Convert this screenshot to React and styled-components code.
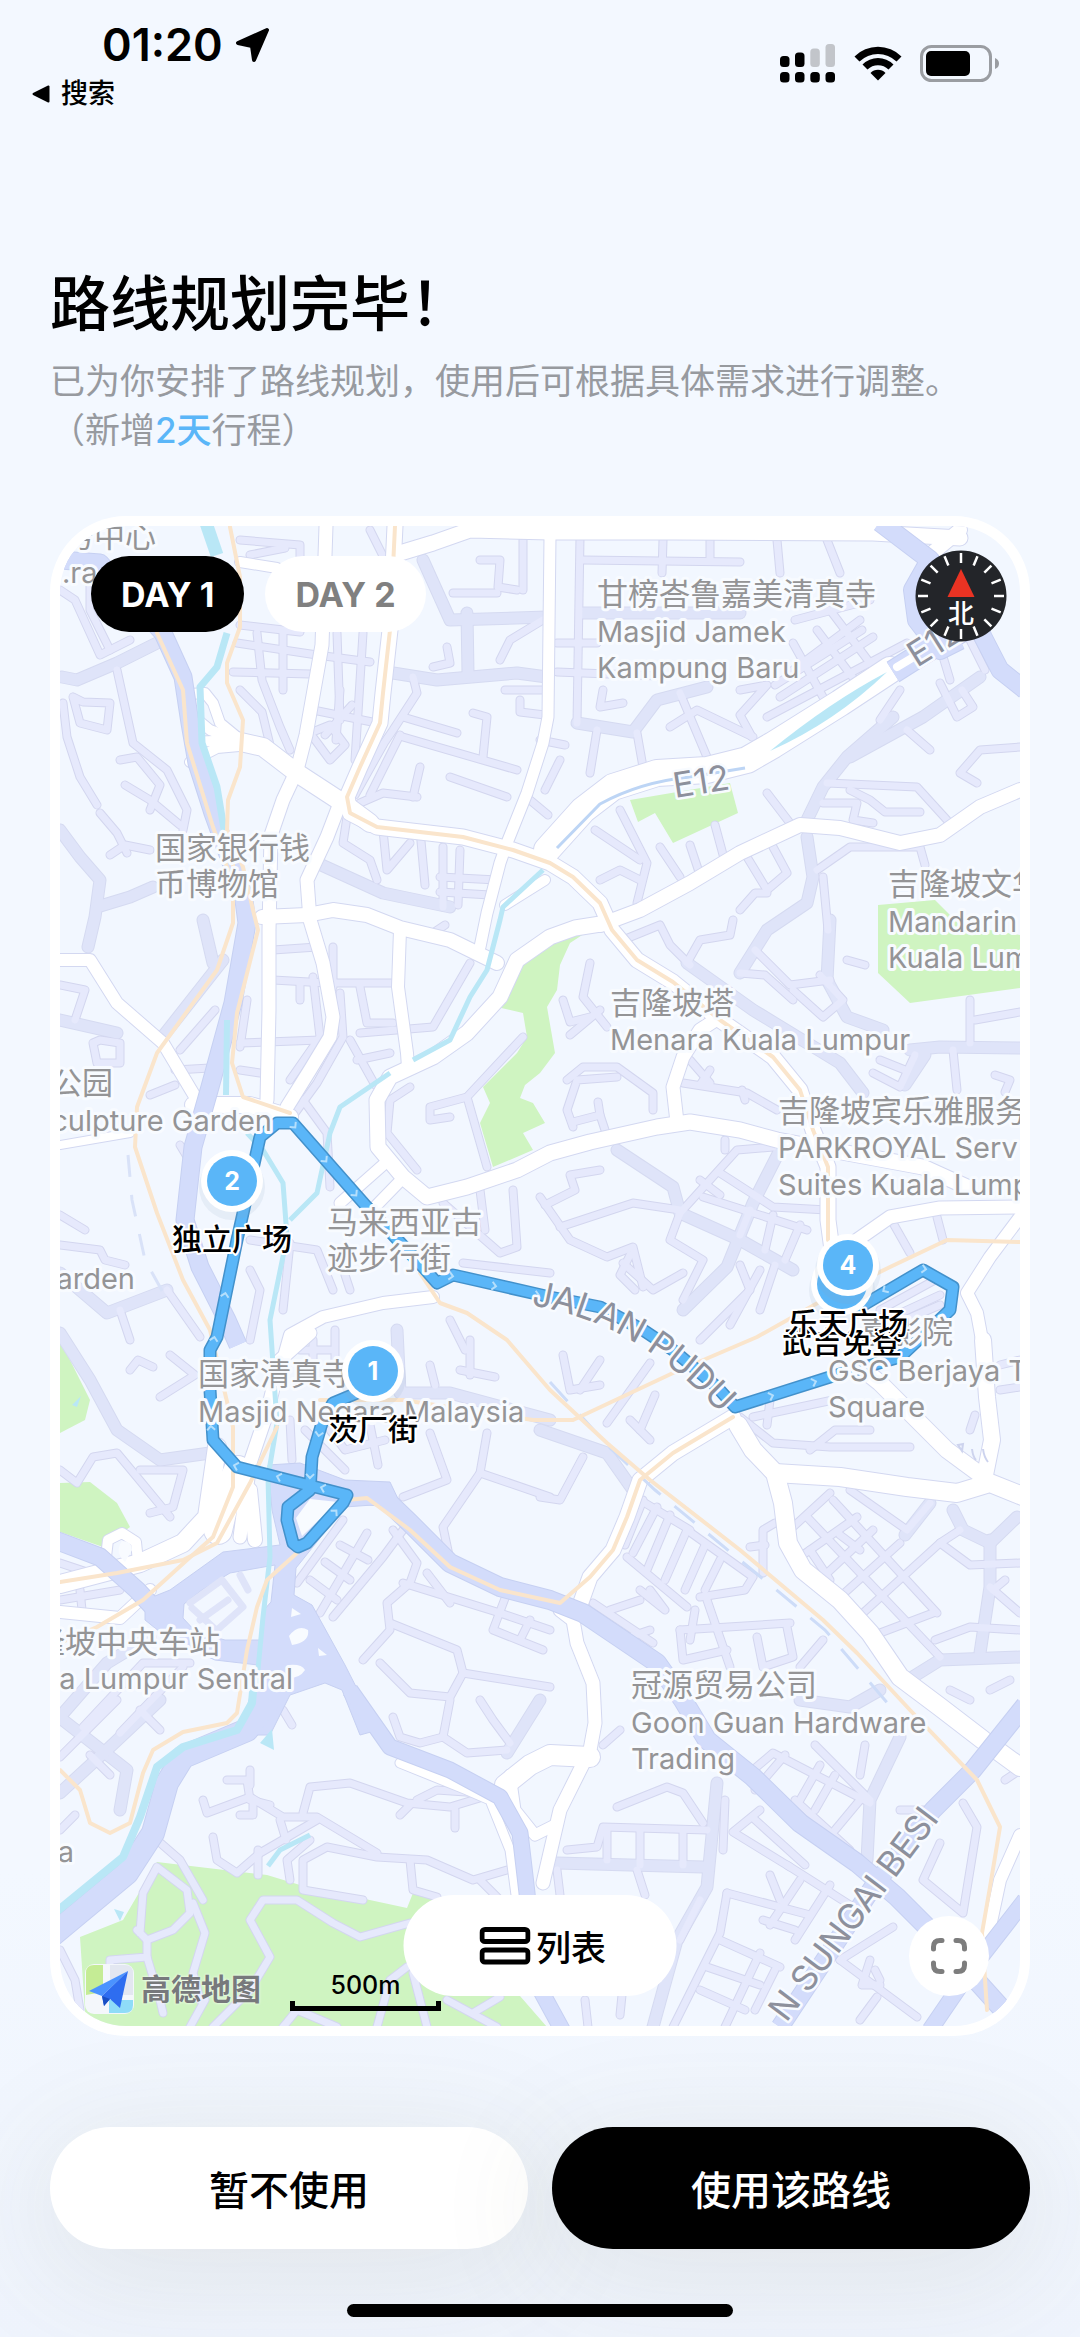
import React, { useState } from 'react';
import styled, { createGlobalStyle } from 'styled-components';

const GlobalStyle = createGlobalStyle`
  * {
    box-sizing: border-box;
  }

  body {
    margin: 0;
    background: #f3f8ff;
    font-family: Inter, 'Noto Sans CJK SC', sans-serif;
    color: #000;
  }

  button {
    border: 0;
    padding: 0;
    font-family: inherit;
    cursor: pointer;
  }
`;

const Page = styled.div`
  min-height: 100vh;
  display: flex;
  flex-direction: column;
  overflow: hidden;
  background: linear-gradient(180deg, #f3f8ff 0%, #f3f8ff 80%, #eff4fd 100%);
`;

/* ---------- status bar ---------- */

const StatusBar = styled.header`
  display: flex;
  justify-content: space-between;
  align-items: flex-start;
  height: 260px;
  padding: 20px 80px 0 32px;
`;

const StatusLeft = styled.div`
  display: flex;
  flex-direction: column;
`;

const Clock = styled.div`
  display: flex;
  align-items: center;
  gap: 12px;
  padding-left: 70px;
  font-size: 45px;
  font-weight: 600;
  line-height: 50px;
`;

const BackLink = styled.a`
  display: flex;
  align-items: center;
  gap: 11px;
  margin-top: 4px;
  font-size: 27px;
  font-weight: 500;
  line-height: 40px;
  color: inherit;
  text-decoration: none;
`;

const StatusIcons = styled.div`
  display: flex;
  align-items: center;
  gap: 18px;
  padding-top: 23px;
`;

/* ---------- heading ---------- */

const Heading = styled.section`
  padding: 0 50px;
`;

const Title = styled.h1`
  margin: 0;
  font-size: 60px;
  font-weight: 500;
  line-height: 88px;
`;

const Subtitle = styled.p`
  margin: 9px 0 0;
  font-size: 35px;
  line-height: 49px;
  color: #979a9f;
`;

const Accent = styled.span`
  color: #5ab6f8;
  font-weight: 500;
`;

/* ---------- map card ---------- */

const MapCard = styled.section`
  position: relative;
  margin: 61px 50px 0;
  padding: 10px;
  border-radius: 76px;
  background: #fff;
`;

const MapCanvas = styled.svg`
  display: block;
  width: 100%;
  height: auto;
  border-radius: 66px;
  background: #f2f7ff;
`;

const Line = styled.polyline`
  fill: none;
  stroke: ${props => props.$color};
  stroke-width: ${props => props.$width};
  stroke-linejoin: round;
  stroke-linecap: ${props => props.$cap || 'round'};
`;

const Label = styled.text`
  font-size: ${props => (props.$latin ? 29 : 31)}px;
  fill: #949496;
  stroke: #f8fbff;
  stroke-width: 6px;
  stroke-linejoin: round;
  paint-order: stroke;
`;

const RoadName = styled.text`
  font-size: 35px;
  fill: #8d909c;
  stroke: #f8fbff;
  stroke-width: 5px;
  stroke-linejoin: round;
  paint-order: stroke;
`;

const PinNumber = styled.text`
  font-size: 25px;
  font-weight: 700;
  fill: #fff;
  text-anchor: middle;
`;

const PinName = styled.text`
  font-size: 30px;
  font-weight: 500;
  fill: #000;
  stroke: #fff;
  stroke-width: 4px;
  stroke-linejoin: round;
  paint-order: stroke;
  text-anchor: middle;
`;

const DayTabs = styled.div`
  position: absolute;
  top: 40px;
  left: 41px;
  display: flex;
  gap: 21px;
`;

const DayTab = styled.button`
  height: 76px;
  padding: 0 30px;
  border-radius: 38px;
  font-size: 34px;
  font-weight: 700;
  background: ${props => (props.$active ? '#000' : '#fff')};
  color: ${props => (props.$active ? '#fff' : '#808080')};
`;

const CompassButton = styled.button`
  position: absolute;
  top: 34px;
  right: 23px;
  width: 92px;
  height: 92px;
  border-radius: 50%;
  background: none;
`;

const ListButton = styled.button`
  position: absolute;
  bottom: 40px;
  left: 50%;
  transform: translateX(-50%);
  display: flex;
  align-items: center;
  justify-content: center;
  gap: 5px;
  width: 273px;
  height: 101px;
  padding-left: 6px;
  border-radius: 51px;
  background: #fff;
  font-size: 35px;
  font-weight: 500;
  color: #000;
`;

const FullscreenButton = styled.button`
  position: absolute;
  right: 41px;
  bottom: 40px;
  display: flex;
  align-items: center;
  justify-content: center;
  width: 80px;
  height: 80px;
  border-radius: 50%;
  background: #fff;
`;

const MapLogo = styled.div`
  position: absolute;
  left: 35px;
  bottom: 22px;
  display: flex;
  align-items: center;
  gap: 7px;
  font-size: 30px;
  font-weight: 700;
  line-height: 50px;
  color: #77797c;
  text-shadow: 0 0 3px #fff;
`;

const MapScale = styled.div`
  position: absolute;
  left: 240px;
  bottom: 25px;
  width: 151px;
  border: 5px solid #000;
  border-top: 0;
  height: 10px;
`;

const ScaleText = styled.span`
  position: absolute;
  left: 0;
  right: 0;
  bottom: 6px;
  text-align: center;
  font-size: 25px;
  font-weight: 500;
  line-height: 30px;
`;

/* ---------- footer ---------- */

const Actions = styled.div`
  display: grid;
  grid-template-columns: 1fr 1fr;
  gap: 24px;
  margin: 91px 50px 0;
`;

const ActionButton = styled.button`
  height: 122px;
  border-radius: 61px;
  font-size: 40px;
  font-weight: 500;
  background: ${props => (props.$primary ? '#000' : '#fff')};
  color: ${props => (props.$primary ? '#fff' : '#000')};
  box-shadow: 0 20px 120px 10px rgba(100, 100, 60, 0.1);
`;

const HomeIndicator = styled.div`
  width: 386px;
  height: 13px;
  margin: auto auto 20px;
  border-radius: 7px;
  background: #000;
`;

/* ---------- map data ---------- */

const MAP_VIEW = '60 526 960 1500';

const parks = [
  '630,800 730,783 738,813 673,843 655,813 638,822',
  '593,928 570,943 560,965 557,990 547,1007 555,1053 540,1073 525,1085 520,1098 533,1103 545,1123 523,1133 533,1150 493,1167 480,1123 490,1103 483,1087 517,1053 527,1037 523,1013 497,1007 510,973 537,943 560,932',
  '878,905 878,973 910,1003 1020,988 1020,935 960,925 935,900',
  '60,1340 90,1400 85,1420 60,1433',
  '60,1483 90,1482 117,1503 130,1527 103,1547 60,1532',
  '157,1862 267,1875 300,1885 407,1908 413,1893 450,1900 520,1996 547,2027 86,2027 80,1937 123,1920',
];

const lanes = [
  '117,670 133,743 167,770 187,810 183,830', '63,703 67,737 80,777 97,805',
  '73,697 80,723 107,730 110,703 83,702 73,697', '120,760 137,757 160,785 150,810', '125,785 150,800 180,825',
  '100,813 117,833 127,853', '110,855 125,845 150,850', '90,570 90,610 110,650', '130,640 100,655 75,600 60,590',
  '237,643 317,655 370,662', '240,625 300,632', '257,633 262,680', '283,633 283,690', '337,633 340,720',
  '363,633 355,760', '233,672 310,674', '263,683 280,727 290,750', '240,690 262,712 270,745', '313,710 377,723',
  '310,733 330,760 345,745 330,725 310,733', '325,735 352,705', '340,690 336,740', '453,593 497,593',
  '480,560 500,560 498,587 517,590', '523,540 523,590', '403,717 457,733', '403,737 517,770', '473,713 487,717 483,757',
  '413,677 417,693 393,730 350,793', '433,667 450,663 447,647', '543,620 510,640 500,660', '450,777 507,797',
  '420,767 413,797', '360,803 383,793 417,797', '347,817 343,843 370,860 377,880', '383,830 387,870 410,843',
  '443,847 443,907', '460,850 458,905', '440,877 497,880', '440,892 490,895', '420,830 425,885', '383,745 355,795', '400,735 370,795',
  '545,690 505,690', '545,715 520,712 520,700', '530,800 548,815', '240,540 300,545 300,560', '250,555 285,548', '370,530 385,560 345,575',
  '580,537 577,723', '663,540 662,573', '710,540 710,560', '583,560 740,562', '777,540 780,573', '827,540 840,573',
  '557,643 597,643', '557,672 660,676', '603,690 600,707 623,703', '680,693 707,757', '670,727 697,710 753,737',
  '637,733 643,767', '597,730 590,773', '740,690 767,685 740,715 752,737', '767,717 907,643', '780,697 873,637',
  '793,670 860,620', '775,685 862,630', '793,643 823,697', '817,630 857,683', '830,610 873,667', '795,620 870,600',
  '940,683 957,717 973,707 962,690', '907,730 930,750', '1020,747 980,750 960,773 977,783', '827,783 917,787 947,820',
  '823,803 857,803 853,820 873,823', '850,790 870,800 885,812 920,812', '767,793 793,827', '817,870 850,847 920,847 925,865', '823,877 828,930',
  '620,810 647,863 637,903', '660,847 680,877', '747,857 767,890 787,873 773,847', '740,910 755,893 767,893', '595,830 640,860', '600,880 620,870 640,880',
  '690,845 700,875', '715,825 725,862', '540,740 565,745', '560,760 545,790', '900,690 880,720', '935,630 950,680', '970,640 985,670',
  '273,950 317,947', '273,980 327,983 393,983', '333,947 333,987', '240,1043 320,1040', '247,1000 240,1047', '240,1070 260,1073',
  '313,977 320,1037 290,1080', '340,993 343,1037 317,1083 290,1120', '360,987 367,1023 393,1023', '357,1060 390,1053', '350,1040 375,1085',
  '470,963 433,1027 360,1033', '60,985 85,990 75,1020', '93,1043 97,1063 120,1063 120,1043 100,1040 93,1043', '300,985 300,1000',
  '523,1037 467,1097 430,1107 430,1120 450,1117', '467,1097 487,1167', '410,1087 390,1100 387,1133 417,1170', '303,1100 327,1133 330,1187',
  '443,1203 500,1253 517,1247 513,1190', '250,1240 317,1250 333,1290', '463,1263 550,1273', '167,1290 200,1337', '120,1310 130,1340',
  '290,1243 283,1310', '175,1070 210,1068', '180,1050 215,1010', '150,1095 175,1085', '60,1245 100,1250 105,1260 125,1265', '180,1145 195,1170',
  '250,1270 260,1290 250,1340', '345,1275 350,1290', '450,1320 465,1350', '480,1190 485,1230', '60,1215 85,1230', '430,935 445,925',
  '60,1470 77,1483 93,1457 117,1453 137,1477 170,1517', '140,1470 183,1470 173,1507 150,1513', '130,1370 138,1360 153,1367', '160,1397 195,1375 170,1355',
  '487,1433 480,1473 443,1527 450,1560', '480,1473 550,1497', '430,1433 447,1480 403,1497', '343,1520 297,1583', '367,1533 320,1613', '403,1530 383,1557 333,1617',
  '340,1545 368,1560', '325,1562 350,1580', '310,1580 337,1600', '393,1530 417,1563 410,1583 387,1603 390,1630 363,1660',
  '390,1623 457,1650 463,1673 450,1697 410,1693 380,1663', '403,1583 500,1613 550,1630', '463,1673 550,1687', '507,1593 493,1630 543,1650',
  '427,1573 450,1603', '530,1620 520,1640', '83,1727 143,1663 190,1663', '120,1733 183,1667',
  '60,1563 90,1573', '80,1590 82,1610', '60,1600 120,1590', '313,1340 313,1380', '335,1330 335,1360', '330,1350 300,1350', '330,1430 345,1450 385,1440',
  '370,1425 378,1465', '460,1370 495,1377', '430,1365 435,1385', '470,1340 470,1375', '290,1420 292,1460', '305,1430 345,1470',
  '60,1757 117,1700', '140,1710 160,1730', '90,1755 110,1775', '203,1800 207,1813 250,1797 283,1817 317,1817 377,1853', '227,1780 247,1780 250,1800 270,1805',
  '250,1770 250,1785', '240,1815 253,1815 253,1805', '303,1813 310,1787 350,1783 407,1803 450,1807 483,1797', '417,1800 437,1790 480,1793', '410,1805 400,1815', '455,1810 455,1828',
  '213,1837 217,1860 237,1873 260,1853 317,1820', '280,1820 286,1840', '258,1850 258,1875', '290,1880 287,1860 310,1840',
  '363,1900 303,1890 303,1860 327,1847 377,1857 427,1860 473,1880 507,1870', '410,1860 413,1890 437,1897', '157,1840 180,1860 203,1900', '480,1880 500,1900',
  '140,1933 143,1893 157,1867 187,1890 190,1913 173,1930 147,1940 137,1930', '193,1903 205,1933 193,1973 200,2000', '147,1940 147,1957 110,1960 110,1980',
  '147,1957 160,2000 163,2013', '410,1923 360,1937 333,1923 297,1900 263,1900 250,1920 270,1957 250,1990 213,2027', '407,1967 390,1980 377,2027',
  '413,1973 427,2027', '283,2027 297,2010 337,2027', '447,2000 497,2027', '473,2013 500,1997', '60,1950 75,1980 80,2010', '190,2027 205,2000',
  '393,1717 400,1737 420,1743 443,1737 467,1753 507,1750', '443,1737 450,1700', '480,1700 493,1720 510,1743', '283,1710 292,1725', '60,1830 75,1815',
  '687,963 700,940 730,935 733,920', '623,940 660,925 670,945 690,965', '590,963 583,997 607,1027', '563,1000 570,1022 590,1017', '570,1035 600,1010',
  '567,1080 583,1067 617,1067 653,1093 653,1110', '617,1077 577,1080 567,1110 573,1127', '573,1122 600,1115 598,1102', '600,1115 605,1130', '683,1083 747,1093 777,1110', '690,1060 710,1083', '710,1070 700,1085', '742,1090 745,1100',
  '740,973 765,975 793,1000', '755,950 790,985 830,980', '793,990 823,1017 843,1000 820,975', '847,960 865,965', '970,1000 970,1043', '975,1020 1020,1012', '953,1050 957,1090',
  '873,1073 900,1087 915,1055', '880,1060 905,1070', '995,1075 1010,1080 1005,1092', '560,1227 633,1203 680,1210', '540,1197 570,1240 607,1257 633,1247 643,1287', '545,1205 575,1190 570,1175 600,1170',
  '680,1213 737,1150 773,1147', '680,1213 670,1240 703,1260 683,1300', '703,1197 807,1230', '720,1173 773,1207 827,1210', '700,1180 720,1195', '750,1210 740,1235', '773,1215 765,1250',
  '800,1225 785,1260', '725,1140 725,1150', '623,1263 653,1290 683,1273', '630,1255 620,1275 635,1290', '893,1223 910,1253', '937,1217 943,1240', '740,1265 750,1290 700,1340', '760,1270 730,1325', '775,1265 760,1310',
  '880,1310 935,1280', '890,1318 940,1295', '905,1320 940,1305', '583,1457 560,1500 540,1497', '650,1363 607,1423', '563,1355 570,1390 600,1385', '580,1390 600,1360', '630,1420 650,1440',
  '655,1395 640,1430', '740,1417 773,1443 830,1447 910,1447', '753,1417 833,1400', '767,1425 770,1400', '810,1450 835,1430 870,1430', '793,1527 830,1493', '807,1517 940,1657', '833,1500 937,1613',
  '850,1490 907,1530 930,1503', '800,1557 857,1517', '823,1577 873,1530', '840,1597 900,1543', '863,1613 940,1543 960,1530', '880,1633 933,1613', '810,1550 830,1580', '840,1535 860,1550',
  '940,1543 970,1565 1020,1563', '935,1640 970,1627 1020,1630', '990,1587 1020,1613', '993,1590 1005,1580', '970,1430 975,1415', '1000,1365 1020,1360', '1000,1390 1020,1387',
  '643,1500 625,1545', '657,1507 633,1553', '670,1515 647,1570', '687,1530 665,1580', '640,1500 690,1530', '627,1557 687,1607', '687,1530 753,1577 745,1590 700,1597', '705,1545 685,1590',
  '720,1560 705,1590', '593,1603 653,1643', '610,1610 640,1600', '620,1640 650,1630', '680,1630 790,1623', '680,1630 683,1660 727,1650', '707,1600 730,1667', '640,1590 665,1610 650,1590', '695,1610 690,1640', '757,1637 763,1667 793,1657 787,1627',
  '823,1640 800,1667', '763,1573 763,1530 775,1523', '750,1547 765,1545', '617,1807 667,1787 683,1793 703,1823', '567,1850 597,1847 603,1827 707,1830', '607,1830 607,1860', '640,1830 640,1865', '683,1830 683,1865', '603,1745 620,1730',
  '637,1870 645,1895', '557,1870 560,1895', '725,1800 723,1850', '760,1810 733,1832 790,1867', '752,1817 805,1865', '753,1770 773,1753 870,1803', '785,1755 755,1790', '795,1800 850,1850', '820,1765 800,1800', '835,1775 815,1810', '860,1800 835,1830',
  '815,1745 870,1800', '865,1745 860,1775', '727,1893 720,1933 673,2027', '727,1893 810,1915', '770,1875 780,1900', '800,1880 770,1925', '830,1885 795,1940', '720,1940 780,1967', '707,1967 760,1985', '700,1990 745,2010', '760,1953 725,2027',
  '775,1970 755,2010', '787,1865 850,1905', '763,1920 795,1930', '840,1960 917,2017', '893,1927 840,1960', '875,1970 880,1980', '870,1960 862,1985 880,1985', '963,1803 977,1827 963,1913 923,1880 940,1843', '860,2020 877,1997', '1005,1780 1020,1770', '950,1690 970,1700', '990,1690 1010,1680', '900,1810 925,1810', '585,2000 588,2027', '622,1995 620,2015', '700,1900 680,1940',
];

const streets = [
  '62,677 77,680 117,663 157,643', '60,830 80,857 100,880 95,917 88,947', '97,907 130,897 153,887', '393,673 437,680 517,673 547,677', '467,613 468,673', '423,560 450,620 547,617',
  '317,863 383,893 450,907', '583,613 740,613', '577,723 633,732 657,700 707,687', '893,717 847,757 823,787 807,820', '980,677 923,717 850,757', '807,837 813,877 807,903 767,930 740,973',
  '60,1020 117,1033', '203,920 213,963', '223,960 160,1040', '60,1273 107,1313 167,1290', '60,1333 90,1380 117,1430 160,1460 210,1453', '397,1330 400,1393', '403,1393 450,1393 550,1420',
  '60,1717 107,1663 150,1637', '63,1720 127,1770 120,1810', '60,1793 110,1747 160,1700', '540,1700 507,1753', '830,920 827,980 847,1017 883,1030', '687,963 753,1010 840,1063 863,1093',
  '910,1050 940,1047 1020,1048', '617,1150 673,1187 680,1213 740,1240 793,1270', '780,1150 753,1203 727,1267 683,1310', '540,1430 607,1453 633,1490', '953,1510 963,1530 990,1543 1017,1517', '990,1540 990,1587 980,1653',
  '903,1683 940,1660 1020,1657', '557,1863 703,1867', '717,1783 707,1887 677,1940 653,2027', '867,1860 870,1800 900,1737', '800,1700 850,1707 880,1690', '905,1085 925,1055', '930,1503 905,1535',
];

const mainRoads = [
  [13, '326,526 322,645 314,690 306,735 297,770 283,800 271,835 269,930 269,1010 267,1100'],
  [15, '395,526 390,630 383,693 380,723 360,767 347,797 350,813 377,827 463,837 513,850 550,863 573,877 600,903 612,930 637,960 673,982 720,1020 773,1057 800,1090 813,1130 828,1167 828,1220 832,1250'],
  [10, '240,562 277,568'],
  [10, '190,694 205,693 213,703 220,723 237,737'],
  [10, '192,715 210,730 237,740'],
  [10, '190,742 237,740'],
  [10, '190,762 217,748 250,745'],
  [18, '232,740 263,747 297,773 343,803 370,823'],
  [13, '340,803 327,837 307,880 310,920 323,963 333,1017 330,1037 310,1070 287,1107'],
  [14, '262,917 307,915 333,910 367,915 400,928 450,940 497,963'],
  [12, '400,930 398,987 407,1053 408,1067'],
  [15, '607,923 575,928 550,937 517,960 500,997 467,1033 433,1057 390,1077 377,1100 378,1147 403,1177 427,1197 467,1187 517,1170 550,1153 590,1142 657,1127 690,1122 740,1130 777,1140 923,1167 967,1187'],
  [13, '677,1122 673,1087 683,1057 700,1030 720,1017'],
  [14, '600,925 640,910 690,883 740,853 800,825 840,828 900,843 940,835 980,807 1020,790'],
  [26, '547,850 583,810 613,787 657,773 707,770 747,760 773,745 840,703 890,670'],
  [15, '400,553 433,543 470,530 550,532 673,532 873,533 960,538'],
  [11, '550,537 548,717 543,743 527,793 507,843 500,863 487,913 480,947'],
  [10, '545,880 505,905'],
  [14, '930,555 960,530'],
  [12, '50,960 90,960 117,1003 163,1043 197,1100'],
  [16, '193,1105 250,1105 290,1117'],
  [11, '383,1165 340,1203'],
  [11, '403,1178 370,1212'],
  [12, '283,1360 290,1335 323,1317 383,1303 433,1297'],
  [8, '60,1145 130,1133'],
  [13, '310,1333 280,1360 267,1413 250,1463 240,1537'],
  [18, '217,1447 207,1517 183,1543 140,1563 60,1584'],
  [28, '238,1470 225,1500 218,1530'],
  [14, '250,1490 255,1540'],
  [10, '105,1565 108,1540 122,1533 136,1542 138,1562'],
  [12, '60,1612 120,1618 150,1590'],
  [15, '733,1417 673,1453 640,1480 627,1517 613,1550 590,1577 580,1605'],
  [18, '738,1425 753,1450 775,1473 783,1503 788,1543 803,1570 840,1600 870,1633 900,1677 940,1707 983,1740 1020,1767'],
  [18, '775,1473 840,1477 907,1487 957,1493 990,1483 1025,1497'],
  [16, '870,1375 880,1383 917,1420 947,1450 985,1478'],
  [16, '983,1340 987,1397 992,1440 985,1475'],
  [12, '1020,1217 990,1257 967,1293 977,1313 982,1340'],
  [13, '857,1240 890,1217 940,1208 1020,1207'],
  [13, '560,1610 573,1620 577,1643 593,1683 595,1723 590,1750 560,1810 543,1883'],
  [20, '505,1785 530,1765 550,1755 590,1757'],
  [11, '510,1775 515,1810 535,1835 555,1825'],
  [9, '400,1763 467,1790 490,1800 510,1850 516,1895'],
  [12, '1020,1835 1000,1880 985,1950'],
];

const highways = [
  [17, '60,560 100,563 163,633 183,677 190,723 197,763 213,813 230,860 243,893 247,923 233,1003 210,1087 193,1147 185,1220 200,1267 227,1320 238,1345'],
  [17, '55,1540 100,1557 137,1590 165,1620'],
  [18, '350,1493 383,1497 410,1523 450,1563 500,1587 550,1600 583,1613 623,1640 657,1663 683,1700 707,1740 753,1777 800,1823 857,1863 897,1897 940,1940 1003,2010'],
  [22, '270,1700 247,1730 183,1757 167,1783 153,1833 127,1873 50,1937'],
  [15, '350,1690 390,1747 450,1770 500,1797 520,1833 527,1893 535,1980 565,2035'],
  [17, '1025,1705 973,1770 933,1810 873,1887 780,2027'],
  [15, '1025,1900 973,1967 930,2030'],
  [18, '880,522 930,560 913,590 917,620 940,650 960,640'],
  [22, '893,672 923,653 980,620'],
  [17, '960,580 983,637 1000,670 1025,690'],
];

const interchange =
  '268,1465 300,1463 345,1480 390,1482 400,1503 345,1507 296,1568 294,1595 312,1605 345,1665 378,1730 360,1735 342,1690 325,1683 290,1695 270,1735 240,1735 258,1665 215,1660 170,1640 145,1620 145,1600 170,1590 223,1552 280,1545 272,1510';

const interchangeLand = '184,1604 202,1590 230,1573 275,1565 271,1602 262,1612 260,1640 225,1640 196,1632 183,1618';

const interchangeLanes = ['190,1603 222,1580 243,1607 217,1630', '200,1620 228,1600', '192,1608 214,1628', '240,1575 248,1590'];

const rivers = [
  [13, '205,520 217,555'],
  [7, '227,633 217,667 200,687 202,743 217,787 225,835'],
  [6, '227,1020 226,1095'],
  [5, '247,1133 263,1150 283,1183 287,1237 270,1320 277,1423 268,1477 270,1557 263,1617 256,1690'],
  [8, '254,1680 252,1703 237,1730 183,1747 157,1767 140,1817 123,1857 50,1917'],
  [5, '290,1220 317,1193 330,1133 340,1107 390,1073'],
  [5, '413,1060 450,1040 470,997 487,970 500,920 503,907 543,870'],
  [5, '268,1866 280,1850 310,1835'],
];

const rails = [
  '157,633 183,690 187,743 213,827 228,870',
  '230,527 240,577 240,627 227,663 227,683 243,720 240,767 228,800 227,830 243,867 253,910 258,930 237,1013 232,1063 243,1097 290,1113',
  '395,526 390,630 383,693 380,723 360,767 347,797 350,813 377,827 463,837 513,850 550,863 573,877 600,903 612,930 637,960 673,982 720,1020 773,1057 800,1090 813,1130 828,1167 828,1240',
  '233,860 233,923 217,970 157,1053 137,1107 135,1147 157,1213 183,1280 210,1330 233,1427 233,1487 213,1537 187,1560 143,1600 97,1627 60,1643',
  '277,1427 250,1483 217,1543 183,1560 117,1573 60,1582',
  '297,1553 267,1580 257,1607 247,1650 237,1713 227,1723 183,1732 153,1750 143,1773 130,1823 110,1833 90,1823 80,1790 60,1770',
  '420,1273 440,1303 467,1313 507,1340 550,1390 607,1443 650,1480 740,1550 823,1620 857,1653 910,1710 977,1780 1000,1827 990,1887 982,1933 987,2010',
  '320,1400 403,1400 533,1420 573,1420 673,1373 757,1337 823,1300 890,1267 947,1240 1020,1242',
  '347,1500 367,1498 410,1530 450,1567 500,1590 560,1603 590,1577 613,1550 627,1517 640,1480 673,1453 733,1417',
];

const route =
  '373,1385 357,1393 333,1403 322,1423 312,1457 310,1490 288,1507 287,1520 293,1543 298,1547 307,1543 343,1503 347,1495 237,1467 213,1440 210,1390 210,1350 217,1337 237,1240 260,1137 277,1123 293,1123 367,1207 423,1267 437,1283 453,1275 550,1297 600,1307 643,1330 673,1350 717,1387 735,1407 830,1377 900,1357 950,1310 953,1287 923,1270 860,1307';

// x, y and heading of the small chevrons along the route
const chevrons = [
  [294, 1126, 50], [325, 1160, 50], [355, 1194, 50], [451, 1276, 10], [494, 1286, 10], [537, 1295, 10],
  [225, 1295, -78], [214, 1339, -78], [211, 1428, -95], [236, 1466, 195], [279, 1477, 195], [323, 1488, 195],
  [335, 1512, -48], [310, 1476, 92], [319, 1434, 100], [771, 1396, -18], [814, 1382, -18], [885, 1290, 148], [924, 1269, 10],
];

const labels = [
  { x: 63, y: 547, text: '务中心' },
  { x: 62, y: 583, text: '.ra', latin: true },
  { x: 597, y: 605, text: '甘榜峇鲁嘉美清真寺' },
  { x: 597, y: 642, text: 'Masjid Jamek', latin: true },
  { x: 597, y: 678, text: 'Kampung Baru', latin: true },
  { x: 155, y: 859, text: '国家银行钱' },
  { x: 155, y: 895, text: '币博物馆' },
  { x: 888, y: 895, text: '吉隆坡文华' },
  { x: 888, y: 932, text: 'Mandarin', latin: true },
  { x: 888, y: 968, text: 'Kuala Lumpur', latin: true },
  { x: 610, y: 1014, text: '吉隆坡塔' },
  { x: 610, y: 1050, text: 'Menara Kuala Lumpur', latin: true },
  { x: 113, y: 1094, text: '公园', end: true },
  { x: 272, y: 1131, text: 'Sculpture Garden', latin: true, end: true },
  { x: 135, y: 1289, text: 'Garden', latin: true, end: true },
  { x: 327, y: 1233, text: '马来西亚古' },
  { x: 327, y: 1269, text: '迹步行街' },
  { x: 778, y: 1122, text: '吉隆坡宾乐雅服务' },
  { x: 778, y: 1158, text: 'PARKROYAL Serv', latin: true },
  { x: 778, y: 1195, text: 'Suites Kuala Lumpur', latin: true },
  { x: 198, y: 1385, text: '国家清真寺' },
  { x: 198, y: 1422, text: 'Masjid Negara Malaysia', latin: true },
  { x: 953, y: 1343, text: '嘉影院', end: true },
  { x: 828, y: 1381, text: 'GSC Berjaya Times', latin: true },
  { x: 828, y: 1417, text: 'Square', latin: true },
  { x: 220, y: 1653, text: '吉隆坡中央车站', end: true },
  { x: 293, y: 1689, text: 'Kuala Lumpur Sentral', latin: true, end: true },
  { x: 631, y: 1696, text: '冠源贸易公司' },
  { x: 631, y: 1733, text: 'Goon Guan Hardware', latin: true },
  { x: 631, y: 1769, text: 'Trading', latin: true },
  { x: 74, y: 1862, text: 'a', latin: true, end: true },
];

const pins = [
  { n: 1, x: 373, y: 1371, name: '茨厂街' },
  { n: 2, x: 232, y: 1181, name: '独立广场' },
  { n: 3, x: 842, y: 1284, name: '武吉免登' },
  { n: 4, x: 848, y: 1265, name: '乐天广场' },
];

/* ---------- icons ---------- */

const LocationArrow = () => (
  <svg width="36" height="36" viewBox="0 0 36 36" aria-hidden="true">
    <path d="M32 3 L3 16 L17 19 L19 33 Z" stroke="#000" strokeWidth="4" strokeLinejoin="round" />
  </svg>
);

const BackArrow = () => (
  <svg width="18" height="18" viewBox="0 0 18 18" aria-hidden="true">
    <path d="M1.500 9 L16.500 1.500 V16.500 Z" stroke="#000" strokeWidth="2" strokeLinejoin="round" />
  </svg>
);

const SignalIcon = () => (
  <svg width="56" height="40" viewBox="0 0 56 40" aria-hidden="true">
    <rect x="0" y="13" width="9.500" height="11" rx="3.500" />
    <rect x="15" y="9.500" width="9.500" height="14.500" rx="3.500" />
    <rect x="30.300" y="5.500" width="9.500" height="18.500" rx="3.500" fill="#c2c5ca" />
    <rect x="45.500" y="1" width="9.500" height="23" rx="3.500" fill="#c2c5ca" />
    {[0, 15, 30.3, 45.5].map(x => (
      <rect key={x} x={x} y="29" width="9.500" height="10.500" rx="3.500" />
    ))}
  </svg>
);

const WifiIcon = () => (
  <svg width="48" height="36" viewBox="0 0 48 36" aria-hidden="true">
    <path d="M0.500 11.500 A33.500 33.500 0 0 1 47.500 11.500 L42.500 16.500 A26.500 26.500 0 0 0 5.500 16.500 Z" />
    <path d="M8.500 19.500 A22 22 0 0 1 39.500 19.500 L34.500 24.500 A15 15 0 0 0 13.500 24.500 Z" />
    <path d="M16.500 28 A10.500 10.500 0 0 1 31.500 28 L24 35.500 Z" />
  </svg>
);

const BatteryIcon = () => (
  <svg width="80" height="38" viewBox="0 0 80 38" aria-hidden="true">
    <rect x="1.500" y="2.500" width="69" height="34" rx="10" fill="none" stroke="#9a9da2" strokeWidth="3" />
    <rect x="6" y="7" width="44" height="25" rx="5" />
    <path d="M75 14 Q79 15.500 79 19.500 Q79 23.500 75 25 Z" fill="#9a9da2" />
  </svg>
);

const Compass = () => (
  <svg width="92" height="92" viewBox="-46 -46 92 92" aria-hidden="true">
    <circle r="45.500" fill="#232529" />
    {Array.from({ length: 16 }, (_, i) => (
      <line key={i} y1="-43" y2="-33" stroke="#fff" strokeWidth="2.500" transform={`rotate(${i * 22.5})`} />
    ))}
    <path d="M0 -27 L13.500 1 H-13.500 Z" fill="#ea3323" />
    <text y="27" fontSize="26" fontWeight="500" fill="#fff" textAnchor="middle">北</text>
  </svg>
);

const ListIcon = () => (
  <svg width="51" height="38" viewBox="0 0 51 38" fill="none" stroke="#000" strokeWidth="5" aria-hidden="true">
    <rect x="2.500" y="2.500" width="46" height="12" rx="3" />
    <rect x="2.500" y="23" width="46" height="12" rx="3" />
  </svg>
);

const FullscreenIcon = () => (
  <svg width="38" height="38" viewBox="0 0 38 38" fill="none" stroke="#7d7d7d" strokeWidth="5" strokeLinecap="round" aria-hidden="true">
    <path d="M3.500 12 V10 Q3.500 3.500 10 3.500 H12 M26 3.500 H28 Q34.500 3.500 34.500 10 V12 M34.500 26 V28 Q34.500 34.500 28 34.500 H26 M12 34.500 H10 Q3.500 34.500 3.500 28 V26" />
  </svg>
);

const AmapIcon = () => (
  <svg width="49" height="50" viewBox="0 0 49 50" aria-hidden="true">
    <rect width="49" height="50" rx="9" fill="#f4f7fb" />
    <path d="M9 1 H18 V28 L1 31 V9 Q1 1 9 1 Z" fill="#c5ec95" />
    <path d="M25 1 H40 Q48 1 48 9 V31 H25 Z" fill="#e3e7f1" />
    <path d="M24 36 H48 V41 Q48 49 40 49 H24 Z" fill="#8fdcf8" />
    <path d="M43 7 L4 27 L17 32 Z" fill="#4b93ff" />
    <path d="M43 7 L17 32 L19 42 L25 35 L35 44 Z" fill="#2e6df0" />
    <path d="M17 32 L19 42 L25 35 Z" fill="#1a4fc4" />
  </svg>
);

/* ---------- map ---------- */

const Pin = ({ pin }) => (
  <g>
    <circle cx={pin.x} cy={pin.y + 6} r="33" fill="#8fa3c0" opacity="0.120" />
    <circle cx={pin.x} cy={pin.y} r="31" fill="#fff" />
    <circle cx={pin.x} cy={pin.y} r="25" fill="#5ab6f8" />
    <PinNumber x={pin.x} y={pin.y + 9}>{pin.n}</PinNumber>
    <PinName x={pin.x} y={pin.y + 69}>{pin.name}</PinName>
  </g>
);

const CityMap = () => (
  <MapCanvas viewBox={MAP_VIEW} role="img" aria-label="路线地图">
    <defs>
      <path id="jalan-pudu" d="M531 1305 C600 1318 660 1345 734 1428" />
    </defs>

    {parks.map(points => <polygon key={points} points={points} fill="#cff4c1" />)}

    {streets.map(points => <Line key={points} points={points} $color="#d5daf1" $width={13} />)}
    {lanes.map(points => <Line key={points} points={points} $color="#d3d6ef" $width={9} />)}
    {streets.map(points => <Line key={points} points={points} $color="#dfe4f9" $width={11} />)}
    {lanes.map(points => <Line key={points} points={points} $color="#e6e9fc" $width={7} />)}

    {mainRoads.map(([width, points]) => <Line key={points} points={points} $color="#d3d8f1" $width={width + 2} />)}
    {mainRoads.map(([width, points]) => <Line key={points} points={points} $color="#fff" $width={width} />)}
    <path d="M770 751 Q835 722 887 672 Q830 702 770 751 Z" fill="#b9e7f6" />
    <path d="M557 848 L600 804 Q640 782 690 777 L745 768" fill="none" stroke="#bdd5f5" strokeWidth="3" />

    {highways.map(([width, points]) => <Line key={points} points={points} $color="#c6d0f2" $width={width + 2} $cap="butt" />)}
    <polygon points={interchange} fill="#d3dcfb" stroke="#c6d0f2" />
    {highways.map(([width, points]) => <Line key={points} points={points} $color="#d3dcfb" $width={width} $cap="butt" />)}
    <polygon points={interchangeLand} fill="#f2f7ff" stroke="#c6d0f2" />
    {interchangeLanes.map(points => <Line key={points} points={points} $color="#dfe4f9" $width={7} />)}
    <Line points="897,667 912,658" $color="#fff" $width={8} />
    <g fill="#f8fbff">
      <path d="M292 1608 L301 1614 L291 1617 Z M289 1636 Q298 1624 308 1630 Q310 1642 292 1645 Z M318 1648 L327 1655 L319 1656 Z M289 1665 Q302 1664 305 1670 Q300 1678 289 1678 Z M310 1499 L338 1502 L302 1536 L296 1518 Z" />
      <path d="M122 1541 Q132 1541 132 1550 L125 1562 Q114 1552 122 1541 Z" />
    </g>
    {rivers.map(([width, points]) => <Line key={points} points={points} $color="#b9e7f6" $width={width} $cap="butt" />)}
    <path d="M260 1743 L272 1729 L274 1750 Z M114 1909 L124 1912 L120 1921 Z M72 1405 L81 1396 L77 1407 Z" fill="#b9e7f6" />
    <path d="M958 1445 L963 1444 L962 1451 Z M972 1449 Q973 1457 976 1460 M983 1449 Q984 1457 988 1462" fill="none" stroke="#cdd3ee" strokeWidth="2" />
    <path d="M128 1155 L132 1200 L145 1260 L170 1305" fill="none" stroke="#d9e2f8" strokeWidth="3" strokeDasharray="22 18" />
    <path d="M550 1382 L610 1448 L655 1490 L740 1560 L825 1630 L890 1706" fill="none" stroke="#cddcf8" strokeWidth="3" strokeDasharray="26 18" />

    {rails.map(points => <Line key={points} points={points} $color="#fae5cc" $width={4} />)}

    <Line points={route} $color="#4391cb" $width={13} />
    <Line points={route} $color="#5ab6f8" $width={10} />
    {chevrons.map(([x, y, angle]) => (
      <path key={`${x}-${y}`} d="M-2 -4 L2 0 L-2 4" transform={`translate(${x} ${y}) rotate(${angle})`} fill="none" stroke="#b5dffc" strokeWidth="2" />
    ))}

    {labels.map(label => (
      <Label key={`${label.x}-${label.y}`} x={label.x} y={label.y} $latin={label.latin} textAnchor={label.end ? 'end' : 'start'}>
        {label.text}
      </Label>
    ))}
    <RoadName transform="translate(675 798) rotate(-9)">E12</RoadName>
    <RoadName transform="translate(917 668) rotate(-32)">E12</RoadName>
    <RoadName>
      <textPath href="#jalan-pudu">JALAN PUDU</textPath>
    </RoadName>
    <RoadName transform="translate(940 1819) rotate(-53)" textAnchor="end">N SUNGAI BESI</RoadName>

    {pins.map(pin => <Pin key={pin.n} pin={pin} />)}
  </MapCanvas>
);

const App = () => {
  const [day, setDay] = useState(1);

  return (
    <>
      <GlobalStyle />
      <Page>
        <StatusBar>
          <StatusLeft>
            <Clock>
              <span>01:20</span>
              <LocationArrow />
            </Clock>
            <BackLink href="#search">
              <BackArrow />
              搜索
            </BackLink>
          </StatusLeft>
          <StatusIcons>
            <SignalIcon />
            <WifiIcon />
            <BatteryIcon />
          </StatusIcons>
        </StatusBar>

        <Heading>
          <Title>路线规划完毕！</Title>
          <Subtitle>
            已为你安排了路线规划，使用后可根据具体需求进行调整。
            <br />
            （新增<Accent>2天</Accent>行程）
          </Subtitle>
        </Heading>

        <MapCard>
          <CityMap />
          <DayTabs>
            {[1, 2].map(n => (
              <DayTab key={n} $active={day === n} aria-pressed={day === n} onClick={() => setDay(n)}>
                DAY {n}
              </DayTab>
            ))}
          </DayTabs>
          <CompassButton aria-label="指南针">
            <Compass />
          </CompassButton>
          <MapLogo>
            <AmapIcon />
            高德地图
          </MapLogo>
          <MapScale>
            <ScaleText>500m</ScaleText>
          </MapScale>
          <ListButton>
            <ListIcon />
            列表
          </ListButton>
          <FullscreenButton aria-label="全屏">
            <FullscreenIcon />
          </FullscreenButton>
        </MapCard>

        <Actions>
          <ActionButton>暂不使用</ActionButton>
          <ActionButton $primary>使用该路线</ActionButton>
        </Actions>

        <HomeIndicator />
      </Page>
    </>
  );
};

export default App;
